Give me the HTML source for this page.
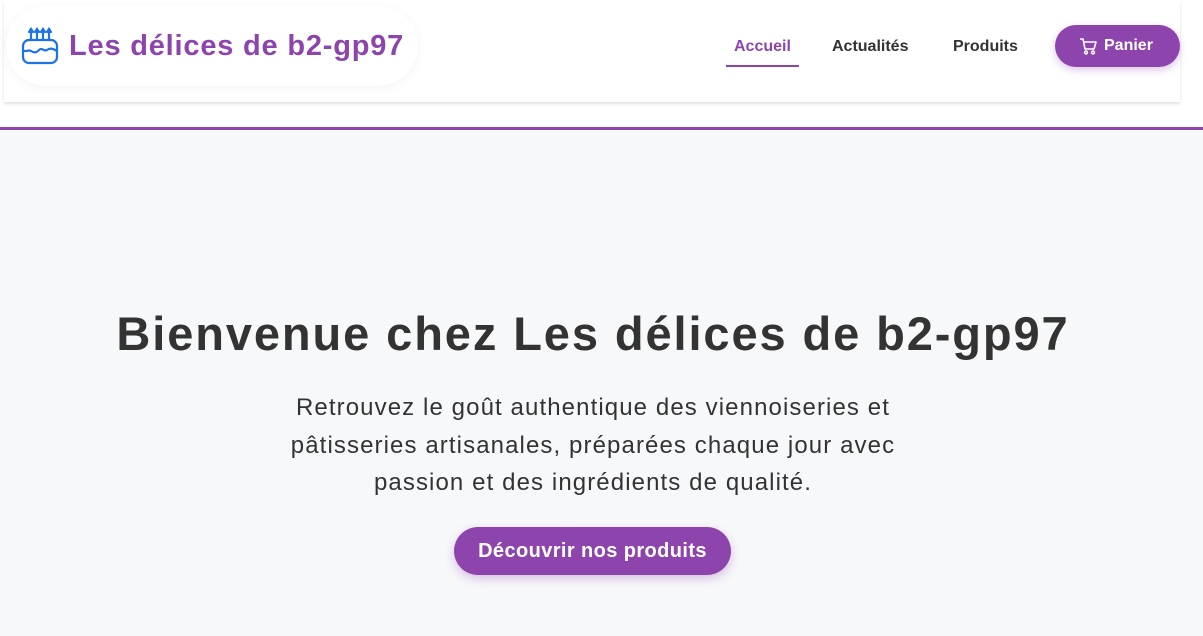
<!DOCTYPE html>
<html><head><meta charset="utf-8"><style>
*{margin:0;padding:0;box-sizing:border-box}
body{width:1203px;height:636px;overflow:hidden;background:#f7f8fa;font-family:"Liberation Sans",sans-serif;position:relative}
.top{position:absolute;left:0;top:0;width:1203px;height:127px;background:#fff}
.line{position:absolute;left:0;top:127px;width:1203px;height:3px;background:#8e44ad}
.hdr{position:absolute;left:4px;top:0;width:1176px;height:102px;background:#fff;box-shadow:0 2px 3px rgba(0,0,0,.12)}
.logo{position:absolute;left:6px;top:6px;width:412px;height:80px;border-radius:40px;background:#fff;box-shadow:0 2px 10px rgba(0,0,0,.05)}
.logo svg{position:absolute;left:14px;top:20px}
.logo span{position:absolute;left:63px;top:24px;font-weight:bold;font-size:29px;color:#8e44ad;letter-spacing:0.8px}
.nav{position:absolute;top:38px;font-size:16px;font-weight:bold;color:#333}
.acc{left:734px;color:#8e44ad}
.acc:after{content:"";position:absolute;left:-8px;right:-8px;top:27px;height:2px;background:#8e44ad}
.btn{position:absolute;left:1055px;top:25px;width:125px;height:42px;border-radius:21px;background:#8e44ad;color:#fff;font-weight:bold;font-size:16px;box-shadow:0 3px 8px rgba(142,68,173,.3)}
.btn svg{position:absolute;left:24px;top:13px}
.btn span{position:absolute;left:49px;top:12px}
h1{position:absolute;left:0;width:1186px;top:306px;text-align:center;font-size:47px;color:#333;letter-spacing:1.9px}
p{position:absolute;left:0;width:1186px;top:389px;text-align:center;font-size:24px;line-height:37.5px;color:#333;letter-spacing:1.1px}
.cta{position:absolute;left:454px;top:527px;width:277px;height:48px;border-radius:24px;background:#8e44ad;color:#fff;font-weight:bold;font-size:20px;text-align:center;line-height:48px;letter-spacing:0.4px;box-shadow:0 4px 10px rgba(142,68,173,.3)}
</style></head><body>
<div class="top"></div><div class="line"></div>
<div class="hdr"></div>
<div class="logo">
<svg width="42" height="40" viewBox="0 0 42 40" fill="none" stroke="#1a73e8" stroke-width="2.2" stroke-linecap="round"><path d="M11 4v10M17 4v10M23 4v10M29 4v10M9 6l2-3 2 3M15 6l2-3 2 3M21 6l2-3 2 3M27 6l2-3 2 3"/><rect x="3" y="14" width="34" height="23" rx="6"/><path d="M3 24c3 3 5-1 8 1s5 2 8-1 5 2 8 0 5-2 10 1"/></svg>
<span>Les délices de b2-gp97</span></div>
<div class="nav acc">Accueil</div>
<div class="nav" style="left:832px">Actualités</div>
<div class="nav" style="left:953px">Produits</div>
<div class="btn"><svg width="18" height="17" viewBox="0 0 18 17" fill="none" stroke="#fff" stroke-width="1.6" stroke-linejoin="round"><path d="M1 1h3l2 10h9l2-7H5"/><circle cx="7" cy="14.5" r="1.4"/><circle cx="14" cy="14.5" r="1.4"/></svg><span>Panier</span></div>
<h1>Bienvenue chez Les délices de b2-gp97</h1>
<p>Retrouvez le goût authentique des viennoiseries et<br>pâtisseries artisanales, préparées chaque jour avec<br>passion et des ingrédients de qualité.</p>
<div class="cta">Découvrir nos produits</div>
</body></html>
